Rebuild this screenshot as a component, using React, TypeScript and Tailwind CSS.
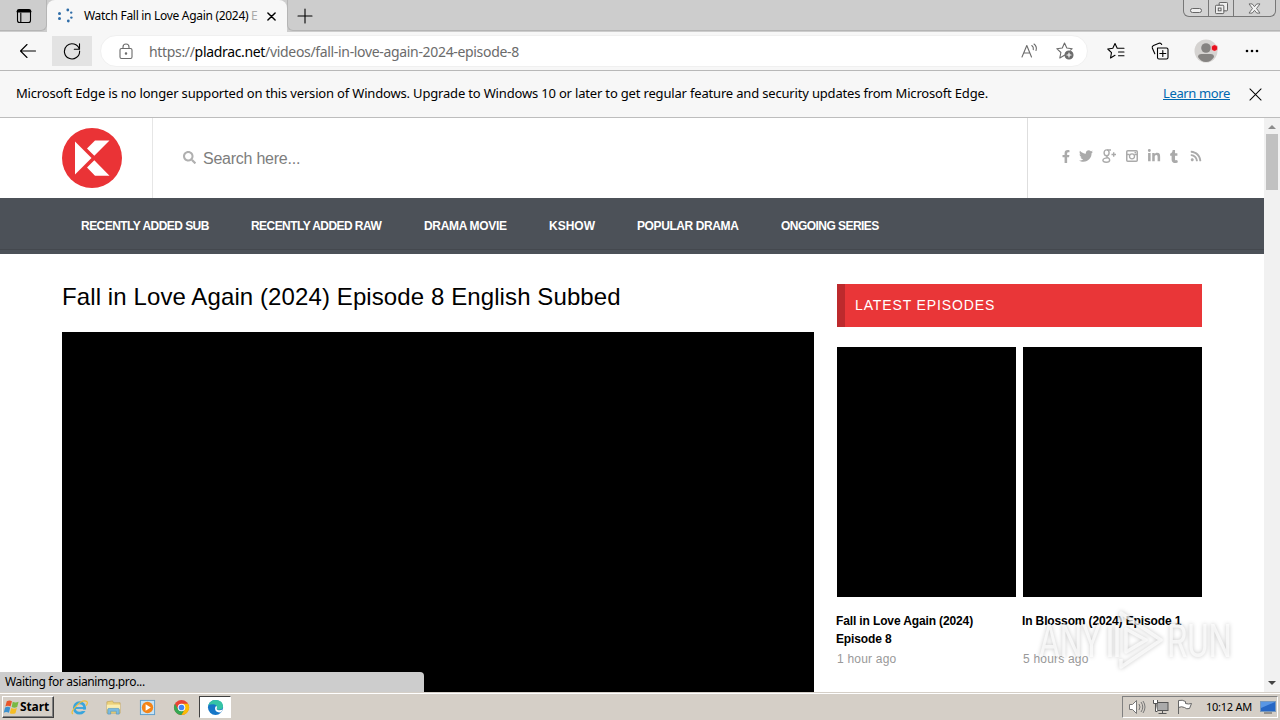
import type { ReactNode } from 'react';
import { FaFacebookF, FaLinkedinIn, FaRss, FaSearch, FaTumblr, FaTwitter } from 'react-icons/fa';

type SvgProps = {
  className?: string;
  viewBox: string;
  children: ReactNode;
};

const Line = ({ className, viewBox, children }: SvgProps) => (
  <svg
    viewBox={viewBox}
    className={className}
    fill="none"
    stroke="currentColor"
    strokeWidth="1.1"
    strokeLinecap="round"
    strokeLinejoin="round"
  >
    {children}
  </svg>
);

const TabBar = () => (
  <div className="flex h-8 items-start bg-[#cdcdcd]">
    <div className="flex h-[31px] w-[47px] items-center justify-center rounded-br-md border-r border-b border-[#b5b5b5]">
      <Line viewBox="0 0 16 16" className="mt-px ml-0.5 size-4">
        <rect x="1.5" y="1.5" width="13" height="13" rx="2" />
        <path d="M1.5 3.5h13M2 2.5h12" strokeWidth="2" />
        <path d="M4.8 5v9" />
      </Line>
    </div>
    <div className="flex h-8 w-[240px] items-center rounded-t-lg bg-[#f7f7f7] pl-[10px]">
      <svg viewBox="0 0 16 16" className="size-4" fill="#2f6da8">
        <circle cx="2.5" cy="5.5" r="1.5" />
        <circle cx="2.5" cy="10.5" r="1.5" />
        <circle cx="10.8" cy="2" r="1.4" />
        <circle cx="14.2" cy="4.6" r="1.2" />
        <circle cx="14.4" cy="9.6" r="1.2" />
        <circle cx="11.3" cy="13" r="1.4" />
      </svg>
      <span className="ml-[11px] w-[175px] text-[12px] tracking-[-0.3px] whitespace-nowrap">
        Watch Fall in Love Again (2024) <span className="text-[#aaa]">E</span>
      </span>
      <Line viewBox="0 0 10 10" className="ml-[8px] size-[9px]">
        <path d="M1 1l8 8M9 1l-8 8" strokeWidth="1.6" />
      </Line>
    </div>
    <div className="flex h-[31px] flex-1 justify-between rounded-bl-md border-b border-l border-[#b5b5b5]">
      <Line viewBox="0 0 16 16" className="mt-2 ml-[9px] size-4">
        <path d="M8 1v14M1 8h14" />
      </Line>
      <div className="mr-1 flex h-[17px] rounded-b-md border border-t-0 border-[#777] bg-[#d3d3d3] text-[#666]">
        <div className="flex w-[25px] justify-center border-r border-[#777]">
          <span className="mt-2 h-[5px] w-3 rounded-sm border border-[#666] bg-[#eee]" />
        </div>
        <div className="flex w-[25px] justify-center border-r border-[#777]">
          <svg viewBox="0 0 14 14" className="mt-[2px] size-[13px]" fill="#eee" stroke="#555">
            <rect x="4.5" y=".5" width="9" height="9" rx="1" />
            <rect x=".5" y="3.5" width="9" height="9" rx="1" />
            <rect x="3.5" y="6.5" width="3" height="3" />
          </svg>
        </div>
        <div className="flex w-[41px] justify-center">
          <svg viewBox="0 0 14 12" className="mt-[3px] h-[11px] w-[13px]" fill="#f3f3f3" stroke="#666">
            <path d="M1 1h3.500L7 4l2.500-3H13L9.200 6 13 11H9.500L7 8l-2.500 3H1l3.800-5z" />
          </svg>
        </div>
      </div>
    </div>
  </div>
);

const Toolbar = () => (
  <div className="flex h-[39px] items-center border-b border-[#b8b8b8] bg-[#f7f7f7]">
    <Line viewBox="0 0 16 16" className="ml-5 size-4">
      <path d="M15.500 8H.7M7 1.500L.5 8 7 14.500" />
    </Line>
    <div className="ml-4 flex h-[30px] w-10 items-center justify-center bg-[#e3e3e3]">
      <Line viewBox="0 0 18 18" className="size-[18px]">
        <path d="M16.300 7.200A7.600 7.600 0 1 0 16.600 9M16.500 1.800v5.400h-5.200" />
      </Line>
    </div>
    <div className="ml-2 flex h-8 w-[988px] items-center rounded-full border border-[#f0f0f0] bg-white text-[#6b6b6b]">
      <Line viewBox="0 0 14 16" className="ml-[18px] h-[17px] w-[14px]">
        <rect x="1" y="5" width="12" height="10" rx="1.500" />
        <path d="M4 5V3.500a3 3 0 0 1 6 0V5" />
        <circle cx="7" cy="10" r=".7" fill="currentColor" />
      </Line>
      <span className="ml-4 flex-1 text-[14px] tracking-[-0.33px] whitespace-nowrap">
        https://<span className="text-black">pladrac.net</span>/videos/fall-in-love-again-2024-episode-8
      </span>
      <Line viewBox="0 0 18 16" className="h-4 w-[18px]">
        <path d="M1 14L5.800 2.500 10.500 14M2.700 10h6.200M10.800 2.500c1.400 1 1.800 2.600 1.500 4.200M13 1c2.200 1.700 2.800 4.200 2 6.500" />
      </Line>
      <Line viewBox="0 0 18 18" className="mr-[13px] ml-[17px] size-[18px]">
        <path d="M8.500 13.200L3.800 16l1.100-5.500L.8 6.700l5.500-.7L8.500 1l2.300 5 5.400.7-1.600 1.500" />
        <circle cx="13" cy="13" r="4" fill="currentColor" />
        <path d="M13 11v4M11 13h4" stroke="#fff" />
      </Line>
    </div>
    <Line viewBox="0 0 18 18" className="ml-[19px] size-[18px]">
      <path d="M8 13.300L3.500 16l1-5.300L.8 7l5-.7L8 1.500l2.200 4.800H17M11.500 10H17M11.500 13.700H17" />
    </Line>
    <Line viewBox="0 0 18 18" className="ml-[26px] size-[18px]">
      <path d="M3.800 11.800L1.300 6Q.8 4.200 2.500 3.400L8 1.300q1.800-.6 2.700 1.200" />
      <path d="M6.500 6h9q1.500 0 1.500 1.500v8q0 1.500-1.500 1.500H8q-1.500 0-1.500-1.500z" />
      <path d="M11.800 8.500v6M8.800 11.500h6" />
    </Line>
    <svg viewBox="0 0 24 24" className="ml-[25px] size-6">
      <circle cx="12" cy="12" r="11.500" fill="#d5d3d1" />
      <circle cx="12" cy="9" r="4.800" fill="#858381" />
      <path d="M4 18q0-3 3.500-3h9q3.500 0 3.500 3-3 5-8 5t-8-5" fill="#858381" />
      <circle cx="20.500" cy="9" r="3.300" fill="#e8111e" stroke="#eee" strokeWidth=".7" />
    </svg>
    <svg viewBox="0 0 14 4" className="ml-[27px] h-1 w-[14px]">
      <circle cx="2" cy="2" r="1.300" />
      <circle cx="7" cy="2" r="1.300" />
      <circle cx="12" cy="2" r="1.300" />
    </svg>
  </div>
);

const NoticeBar = () => (
  <div className="flex h-[47px] items-center border-b border-[#bdbdbd] bg-[#f7f7f7] pl-4 text-[13px] whitespace-nowrap">
    <span className="w-[1147px] tracking-[-0.175px]">
      Microsoft Edge is no longer supported on this version of Windows. Upgrade to Windows 10 or later to get regular
      feature and security updates from Microsoft Edge.
    </span>
    <a className="w-[86px] tracking-[-0.37px] text-[#0067b0] underline">Learn more</a>
    <Line viewBox="0 0 14 14" className="size-[13px]">
      <path d="M1 1l12 12M13 1L1 13" />
    </Line>
  </div>
);

const SiteHeader = () => (
  <header className="flex h-20">
    <div className="w-[153px] border-r border-[#e6e6e6] pt-[10px] pl-[62px]">
      <svg viewBox="0 0 60 60" className="size-[60px]">
        <circle cx="30" cy="30" r="30" fill="#ea3336" />
        <path
          d="M13 13.500L29.500 30 13 46.500zM25 20.500L33 12.500H47.500L32.300 27.800zM25 39.500L32.300 32.200 47.500 47.800H33z"
          fill="#fff"
        />
      </svg>
    </div>
    <div className="flex w-[875px] items-center border-r border-[#dedede] pl-[30px] text-[#7d7d7d]">
      <FaSearch className="mb-0.5 size-[13px] text-[#b0b0b0]" />
      <span className="mt-px ml-[7px] text-[16px] tracking-[-0.24px]">Search here...</span>
    </div>
    <div className="flex items-center pb-1 pl-[32px] text-[#aaa]">
      <FaFacebookF className="h-[13px] w-3" />
      <FaTwitter className="ml-[7px] h-[14px] w-[14px]" />
      <svg
        viewBox="0 0 14 14"
        className="ml-[9px] size-[14px]"
        fill="none"
        stroke="currentColor"
        strokeWidth="1.400"
      >
        <ellipse cx="4.600" cy="3.800" rx="2.500" ry="2.900" />
        <path d="M9 1H5M5.500 6.700q-1.500 1 0 1.800 2.200 1 2.200 2.500 0 2.200-3.500 2.200T1 11.200q0-2 4.500-2.300M9.500 5.500H14M11.700 3.200v4.500" />
      </svg>
      <svg viewBox="0 0 12 12" className="ml-[10px] size-3" fill="none" stroke="currentColor">
        <rect x=".75" y=".75" width="10.500" height="10.500" rx="1" strokeWidth="1.500" />
        <circle cx="6" cy="6.300" r="2.500" strokeWidth="1.300" />
        <path d="M1 4.500h2.500M8.500 4.500H11M8.500 2.500h1.500" strokeWidth="1.400" />
      </svg>
      <FaLinkedinIn className="ml-[9px] size-[14px]" />
      <FaTumblr className="ml-[7px] h-[13px] w-3" />
      <FaRss className="ml-[10px] size-[12px]" />
    </div>
  </header>
);

const SiteNav = () => (
  <nav className="h-14 bg-[#4c5158]">
    <div className="flex h-[52px] items-center border-b border-[#44484e] pt-1 pl-[81px] text-[12px] font-bold whitespace-nowrap text-white">
      <span className="w-[170px] tracking-[-0.54px]">RECENTLY ADDED SUB</span>
      <span className="w-[173px] tracking-[-0.56px]">RECENTLY ADDED RAW</span>
      <span className="w-[125px] tracking-[-0.33px]">DRAMA MOVIE</span>
      <span className="w-[88px]">KSHOW</span>
      <span className="w-[144px] tracking-[-0.4px]">POPULAR DRAMA</span>
      <span className="tracking-[-0.54px]">ONGOING SERIES</span>
    </div>
  </nav>
);

type EpisodeType = {
  title: string;
  time: string;
};

const episodes: EpisodeType[] = [
  { title: 'Fall in Love Again (2024) Episode 8', time: '1 hour ago' },
  { title: 'In Blossom (2024) Episode 1', time: '5 hours ago' },
];

const EpisodeCard = ({ title, time }: EpisodeType) => (
  <div className="w-[179px]">
    <div className="h-[250px] bg-black" />
    <h3 className="mt-[15px] -ml-px h-9 pr-3 text-[12px] leading-[18px] font-bold tracking-[-0.13px]">{title}</h3>
    <p className="mt-[2px] text-[12px] leading-[18px] tracking-[0.2px] text-[#999]">{time}</p>
  </div>
);

const Watermark = () => (
  <svg
    viewBox="0 0 200 64"
    className="absolute top-[490px] left-[1037px] h-16 w-[200px] drop-shadow-[0_0_2px_rgba(0,0,0,0.3)]"
  >
    <g fill="#fff" fillOpacity=".72" fontFamily="Roboto, sans-serif" fontSize="46">
      <text x="2" y="49" textLength="62" lengthAdjust="spacingAndGlyphs">
        ANY
      </text>
      <text x="130" y="49" textLength="65" lengthAdjust="spacingAndGlyphs">
        RUN
      </text>
    </g>
    <path
      d="M73 18V49M80 18V49M84 14V5L124 32 84 59V51M89 21V44L109 32z"
      fill="none"
      stroke="#fff"
      strokeOpacity=".72"
      strokeWidth="3.500"
      strokeLinejoin="round"
    />
  </svg>
);

const Scrollbar = () => (
  <div className="flex w-4 flex-col items-center justify-between bg-[#f1f1f1]">
    <div className="flex flex-col items-center">
      <svg viewBox="0 0 8 4" className="mt-[7px] h-1 w-2" fill="#8c8c8c">
        <path d="M0 4L4 0l4 4z" />
      </svg>
      <div className="mt-[5px] h-14 w-3 bg-[#c1c1c1]" />
    </div>
    <svg viewBox="0 0 8 4" className="mb-[7px] h-1 w-2" fill="#444">
      <path d="M0 0l4 4 4-4z" />
    </svg>
  </div>
);

const Taskbar = () => (
  <div className="flex h-7 items-center border-t border-[#d5cfc7] bg-[#d5cfc7] pt-px shadow-[inset_0_1px_0_#fff]">
    <div className="ml-0.5 flex h-[22px] w-[52px] items-center border border-t-white border-r-[#404040] border-b-[#404040] border-l-white shadow-[inset_-1px_-1px_0_#808080]">
      <svg viewBox="0 0 18 16" className="h-4 w-[17px]">
        <path d="M4 2q3-2 5.500 0L8 7.500Q5 6 2.500 7.500z" fill="#e8562a" />
        <path d="M10.300 2.500Q13 4 16.500 2.500L15 8q-3 1.500-5.800 0z" fill="#79b943" />
        <path d="M2.200 8.500q3-1.500 5.500 0L6.300 14q-3-1.500-5.500 0z" fill="#3c91cf" />
        <path d="M8.700 9q3 1.500 6 0l-1.500 5.500q-3 1.500-6 0z" fill="#f5bd25" />
      </svg>
      <span className="font-['Open_Sans',sans-serif] text-[12px] font-bold tracking-[-0.1px]">Start</span>
    </div>
    <svg viewBox="0 0 18 18" className="ml-[17px] size-[17px]" fill="none">
      <circle cx="9" cy="9.500" r="5.500" stroke="#39a5dc" strokeWidth="3" />
      <path d="M4 9.500h11" stroke="#39a5dc" strokeWidth="2" />
      <path d="M11 12h7" stroke="#d5cfc7" strokeWidth="1.500" />
      <path d="M2 16Q-1 14 6 7t11-4q1 1-1 4" stroke="#efbf3b" strokeWidth="1.300" />
    </svg>
    <svg viewBox="0 0 18 18" className="ml-[17px] size-[17px]">
      <path d="M2 3l6-1 1 2h7v11H2z" fill="#ecd27b" stroke="#bb9b4a" strokeWidth=".6" />
      <path d="M2 6h14v5H2z" fill="#faedb0" />
      <path d="M3 16v-5q0-1 1-1h10q1 0 1 1v5h-3v-3H6v3z" fill="#7bbbe2" stroke="#4b91be" strokeWidth=".6" />
    </svg>
    <svg viewBox="0 0 18 18" className="ml-[17px] size-[17px]">
      <rect x="1.500" y="1.500" width="15" height="15" fill="#c7e3f5" stroke="#5e9ecc" />
      <circle cx="9" cy="9" r="6" fill="#f48418" />
      <path d="M7 5.500L12.500 9 7 12.500z" fill="#fff" />
    </svg>
    <svg viewBox="0 0 18 18" className="ml-[17px] size-[17px]">
      <circle cx="9" cy="9" r="8" fill="#e94335" />
      <path d="M2.100 5A8 8 0 0 0 9 17l3.500-6H5.500z" fill="#34a853" />
      <path d="M16 5A8 8 0 0 1 9 17l3.500-6L9 5z" fill="#fbbc05" />
      <circle cx="9" cy="9" r="4" fill="#fff" />
      <circle cx="9" cy="9" r="3" fill="#4285f4" />
    </svg>
    <div className="ml-[9px] flex h-[22px] w-8 items-center justify-center border border-t-[#404040] border-r-white border-b-white border-l-[#404040] bg-white">
      <svg viewBox="0 0 18 18" className="size-[17px]">
        <circle cx="9" cy="9" r="8" fill="#1676c7" />
        <path d="M1.300 7Q3 1 9 1q7.500 0 8 6.500 0 4-4.500 4-3 0-2-2 0-4-4-4Q3 5.500 1.300 7z" fill="#35c4a5" />
        <path d="M10.500 9.500q-1 2 2 2.300 2.500.2 4-1-.5 2-2 3.500-6-.3-6-4.300 0-2 1.500-2.500.8.800.5 2z" fill="#fff" />
      </svg>
    </div>
    <div className="mr-[2px] ml-auto flex h-[22px] w-[156px] items-center border border-t-[#808080] border-r-white border-b-white border-l-[#808080] pl-[5px]">
      <svg viewBox="0 0 18 16" className="h-4 w-[18px]" fill="none" stroke="#777">
        <path d="M1.500 5.500h3l4-4v13l-4-4h-3z" fill="#fff" />
        <path d="M11 5q2 3 0 6M13 3q3.500 5 0 10M15 2q4 6 0 12" />
      </svg>
      <svg viewBox="0 0 18 16" className="ml-[6px] h-4 w-[18px]" fill="#fff" stroke="#555">
        <rect x="5" y="3.500" width="11" height="8" fill="#aaa" />
        <path d="M6.500 14.500h8M10.500 12v2M1.500 1v3.500h4V1M3.500 5v7.500h2" />
      </svg>
      <svg viewBox="0 0 18 16" className="ml-[6px] h-4 w-[18px]" fill="#fff" stroke="#666">
        <path d="M2.500 15V1.500q4-1 7 1v2q3 1 6 0l-2 5q-3 1-5-1-3-1.500-6 0" />
      </svg>
      <span className="ml-[12px] w-[47px] text-[11px] tracking-[-0.25px] whitespace-nowrap">10:12 AM</span>
      <svg viewBox="0 0 16 14" className="ml-[7px] h-[14px] w-4">
        <rect x=".5" y="1.500" width="15" height="10" fill="#2767c5" stroke="#7798bd" />
        <path d="M1 2h14L1 8z" fill="#5996e4" />
        <path d="M4 13h8" stroke="#555" />
      </svg>
    </div>
  </div>
);

const App = () => (
  <div className="h-[720px] w-[1280px] overflow-hidden bg-white font-['Noto_Sans',sans-serif] text-black">
    <TabBar />
    <Toolbar />
    <NoticeBar />
    <div className="relative flex h-[574px] overflow-hidden font-['Liberation_Sans',sans-serif]">
      <div className="w-[1264px]">
        <SiteHeader />
        <SiteNav />
        <main className="flex pl-[62px]">
          <section className="w-[752px]">
            <h1 className="mt-[25px] text-[24px] leading-9 tracking-[0.1px] whitespace-nowrap">
              Fall in Love Again (2024) Episode 8 English Subbed
            </h1>
            <div className="mt-[17px] h-[420px] bg-black" />
          </section>
          <aside className="mt-[30px] ml-[23px] w-[365px]">
            <h2 className="flex h-[43px] items-center border-l-8 border-[#bd2a2d] bg-[#e93638] pl-[10px] text-[14px] tracking-[0.87px] text-white">
              LATEST EPISODES
            </h2>
            <div className="mt-5 flex gap-[7px]">
              {episodes.map((episode) => (
                <EpisodeCard key={episode.title} {...episode} />
              ))}
            </div>
          </aside>
        </main>
      </div>
      <Scrollbar />
      <Watermark />
      <div className="absolute bottom-0 left-0 flex h-5 w-[424px] items-center rounded-tr bg-[#cdcdcd] pl-[5px] font-['Noto_Sans',sans-serif] text-[12px] tracking-[-0.35px]">
        Waiting for asianimg.pro...
      </div>
    </div>
    <Taskbar />
  </div>
);

export default App;
